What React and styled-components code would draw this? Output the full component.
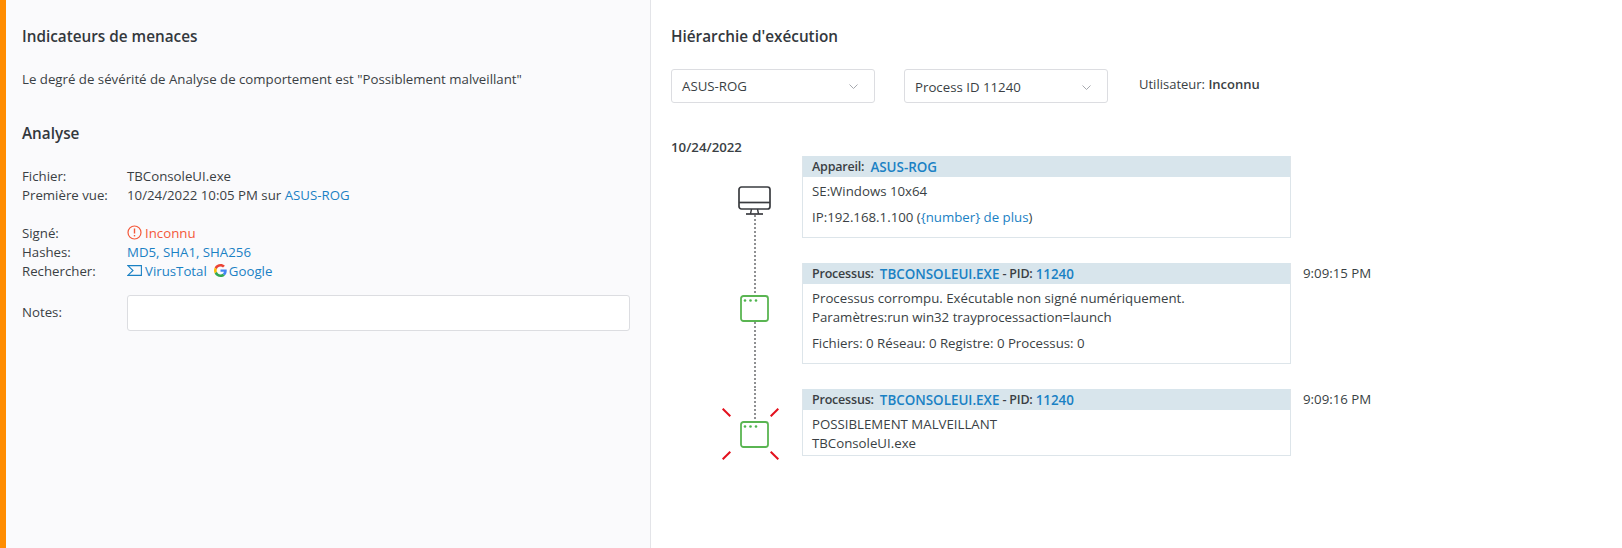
import React from 'react';
import styled, { createGlobalStyle } from 'styled-components';

const GlobalStyle = createGlobalStyle`
  html, body { margin: 0; padding: 0; background: #fff; }
  body {
    font-family: "Open Sans", "Noto Sans", sans-serif;
    font-size: 13.25px;
    color: #3a3f44;
  }
`;

const Page = styled.div`
  display: flex;
  width: 1622px;
  height: 548px;
  overflow: hidden;
`;

const LeftPanel = styled.section`
  width: 651px;
  box-sizing: border-box;
  flex: none;
  background: #fafafc;
  border-left: 6px solid #ff8c00;
  border-right: 1px solid #e3e4e8;
  padding: 26px 20px 0 16px;
`;

const RightPanel = styled.section`
  flex: 1;
  padding: 26px 0 0 20px;
`;

const Title = styled.h2`
  margin: 0;
  font-size: 15.3px;
  line-height: 21px;
  font-weight: 600;
  color: #33383d;
`;

const Paragraph = styled.p`
  margin: 23px 0 0;
  line-height: 18px;
`;

const SectionTitle = styled(Title)`
  margin-top: 35px;
`;

const Facts = styled.div`
  display: grid;
  grid-template-columns: 105px 1fr;
  grid-auto-rows: 19px;
  align-items: center;
  margin-top: ${p => p.$top}px;
`;

const Label = styled.span``;
const Value = styled.span`
  display: flex;
  align-items: center;
  gap: 3px;
`;

const Link = styled.a`
  color: #1a81c4;
  text-decoration: none;
`;

const Danger = styled.span`
  color: #f4583a;
`;

const SearchLink = styled.span`
  display: inline-flex;
  align-items: center;
  gap: ${p => p.$gap}px;
  margin-right: 4px;
`;

const NotesRow = styled.div`
  display: grid;
  grid-template-columns: 105px 1fr;
  align-items: center;
  margin-top: 15px;
`;

const NotesLabel = styled.span`
  padding-bottom: 2px;
`;

const NotesInput = styled.div`
  height: 36px;
  box-sizing: border-box;
  background: #fff;
  border: 1px solid #dcdde1;
  border-radius: 3px;
`;

const Toolbar = styled.div`
  display: flex;
  align-items: center;
  margin-top: 22px;
`;

const Select = styled.div`
  width: 204px;
  height: 34px;
  box-sizing: border-box;
  display: flex;
  align-items: center;
  justify-content: space-between;
  padding: ${p => p.$drop || 0}px 16px 0 10px;
  margin-right: 29px;
  border: 1px solid #dcdde1;
  border-radius: 3px;
  background: #fff;
`;

const UserInfo = styled.div`
  margin-left: 2px;
  margin-top: -5px;
  font-size: 13px;
`;

const Strong = styled.span`
  font-weight: 600;
`;

const DateLabel = styled.div`
  margin-top: 35px;
  height: 18px;
  line-height: 18px;
  font-weight: 600;
`;

const Row = styled.div`
  display: grid;
  grid-template-columns: 131px 489px auto;
  padding-bottom: 25px;
`;

const Rail = styled.div`
  display: flex;
  flex-direction: column;
  align-items: center;
  width: 33px;
  margin-left: 67px;
`;

const dashes = 'repeating-linear-gradient(#8f9092 0 2px, transparent 2px 4px)';

const Stub = styled.div`
  flex: none;
  width: 2px;
  height: ${p => p.$height}px;
  background: ${p => (p.$hidden ? 'none' : dashes)};
`;

const Tail = styled.div`
  flex: 1;
  width: 2px;
  background: ${p => (p.$hidden ? 'none' : dashes)};
  margin-bottom: -25px;
`;

const IconWrap = styled.div`
  position: relative;
  display: flex;
  flex: none;
`;

const Rays = styled.svg`
  position: absolute;
  left: -18px;
  top: -13px;
`;

const Card = styled.div`
  border: 1px solid #dde5ea;
  border-top: 0;
  background: #fff;
`;

const CardHeader = styled.div`
  height: 21px;
  display: flex;
  align-items: center;
  white-space: pre;
  padding-left: 9px;
  background: #d8e5ec;
  font-size: 12.5px;
  font-weight: 600;
  letter-spacing: -0.2px;
`;

const HeaderLink = styled(Link)`
  font-size: 13.4px;
  letter-spacing: 0;
`;

const CardBody = styled.div`
  padding: 5px 9px ${p => p.$bottom}px;
  line-height: 19px;
`;

const Spaced = styled.div`
  margin-top: 7px;
`;

const Time = styled.div`
  padding-left: 12px;
  line-height: 20px;
`;

const Chevron = () => (
  <svg width="9" height="5" viewBox="0 0 9 5" fill="none" stroke="#a6a9ae" strokeWidth="1">
    <polyline points="0.5,0.5 4.500,4.500 8.500,0.5" />
  </svg>
);

const AlertIcon = () => (
  <svg width="15" height="15" viewBox="0 0 15 15" fill="none" stroke="#f4583a" strokeWidth="1.200">
    <circle cx="7.500" cy="7.500" r="6.500" />
    <line x1="7.500" y1="3.500" x2="7.500" y2="8.500" strokeWidth="1.400" />
    <line x1="7.500" y1="10" x2="7.500" y2="11.400" strokeWidth="1.400" />
  </svg>
);

const VirusTotalIcon = () => (
  <svg width="15" height="11" viewBox="0 0 15 11" fill="none" stroke="#1a81c4" strokeWidth="1.100">
    <path d="M0.8 0.6h13.600v9.800H0.8L6 5.500z" />
  </svg>
);

const GoogleIcon = () => (
  <svg width="13" height="13" viewBox="0 0 48 48">
    <path fill="#ea4335" d="M24 9.500c3.500 0 6.700 1.200 9.200 3.600l6.900-6.900C35.900 2.400 30.500 0 24 0 14.600 0 6.500 5.400 2.600 13.200l8 6.200C12.500 13.600 17.800 9.500 24 9.500z" />
    <path fill="#4285f4" d="M47 24.500c0-1.600-.1-3.100-.4-4.500H24v9h12.900c-.6 3-2.200 5.500-4.700 7.200l7.700 6C44.400 38 47 31.800 47 24.500z" />
    <path fill="#fbbc05" d="M10.600 28.600c-.5-1.400-.8-3-.8-4.600s.3-3.200.8-4.600l-8-6.200C.9 16.500 0 20.100 0 24s.9 7.500 2.600 10.800z" />
    <path fill="#34a853" d="M24 48c6.500 0 11.900-2.100 15.900-5.800l-7.700-6c-2.200 1.500-4.900 2.300-8.200 2.300-6.200 0-11.500-4.200-13.400-9.900l-8 6.200C6.500 42.600 14.600 48 24 48z" />
  </svg>
);

const MonitorIcon = () => (
  <svg width="33" height="29" viewBox="0 0 33 29" fill="none" stroke="#3a3c40" strokeWidth="1.700">
    <rect x="1" y="1" width="31" height="22" rx="2.500" />
    <line x1="1" y1="16.500" x2="32" y2="16.500" />
    <path d="M13.500 23l-1 5M19.500 23l1 5" strokeWidth="1.400" />
    <line x1="8" y1="28" x2="25" y2="28" />
  </svg>
);

const WindowIcon = () => (
  <svg width="29" height="27" viewBox="0 0 29 27" fill="none">
    <rect x="1" y="1" width="27" height="25" rx="2.500" stroke="#5ab552" strokeWidth="1.800" />
    <circle cx="5" cy="5.500" r="1.300" fill="#4fb54e" />
    <circle cx="10.500" cy="5.500" r="1.300" fill="#4fb54e" />
    <circle cx="16" cy="5.500" r="1.300" fill="#4fb54e" />
  </svg>
);

const AlertRays = () => (
  <Rays width="57" height="52" viewBox="0 0 57 52" stroke="#e3101d" strokeWidth="2">
    <line x1="0.7" y1="0.7" x2="8.300" y2="8.300" />
    <line x1="56.300" y1="0.7" x2="48.700" y2="8.300" />
    <line x1="0.7" y1="51.300" x2="8.300" y2="43.700" />
    <line x1="56.300" y1="51.300" x2="48.700" y2="43.700" />
  </Rays>
);

const ProcessHeader = () => (
  <CardHeader>
    Processus:  <HeaderLink>TBCONSOLEUI.EXE</HeaderLink> - PID: <HeaderLink>11240</HeaderLink>
  </CardHeader>
);

const App = () => (
  <>
    <GlobalStyle />
    <Page>
      <LeftPanel>
        <Title>Indicateurs de menaces</Title>
        <Paragraph>Le degré de sévérité de Analyse de comportement est "Possiblement malveillant"</Paragraph>
        <SectionTitle>Analyse</SectionTitle>
        <Facts $top={22}>
          <Label>Fichier:</Label>
          <Value>TBConsoleUI.exe</Value>
          <Label>Première vue:</Label>
          <span>10/24/2022 10:05 PM sur <Link>ASUS-ROG</Link></span>
        </Facts>
        <Facts $top={19}>
          <Label>Signé:</Label>
          <Value><AlertIcon /><Danger>Inconnu</Danger></Value>
          <Label>Hashes:</Label>
          <Value><Link>MD5, SHA1, SHA256</Link></Value>
          <Label>Rechercher:</Label>
          <Value>
            <SearchLink $gap={3}><VirusTotalIcon /><Link>VirusTotal</Link></SearchLink>
            <SearchLink $gap={2}><GoogleIcon /><Link>Google</Link></SearchLink>
          </Value>
        </Facts>
        <NotesRow>
          <NotesLabel>Notes:</NotesLabel>
          <NotesInput />
        </NotesRow>
      </LeftPanel>
      <RightPanel>
        <Title>Hiérarchie d'exécution</Title>
        <Toolbar>
          <Select>ASUS-ROG<Chevron /></Select>
          <Select $drop={2}>Process ID 11240<Chevron /></Select>
          <UserInfo>Utilisateur: <Strong>Inconnu</Strong></UserInfo>
        </Toolbar>
        <DateLabel>10/24/2022</DateLabel>
        <Row>
          <Rail>
            <Stub $hidden $height={30} />
            <IconWrap><MonitorIcon /></IconWrap>
            <Tail />
          </Rail>
          <Card>
            <CardHeader>Appareil:  <HeaderLink>ASUS-ROG</HeaderLink></CardHeader>
            <CardBody $bottom={10}>
              <div>SE:Windows 10x64</div>
              <Spaced>IP:192.168.1.100 (<Link>{'{number} de plus'}</Link>)</Spaced>
            </CardBody>
          </Card>
          <Time />
        </Row>
        <Row>
          <Rail>
            <Stub $height={32} />
            <IconWrap><WindowIcon /></IconWrap>
            <Tail />
          </Rail>
          <Card>
            <ProcessHeader />
            <CardBody $bottom={10}>
              <div>Processus corrompu. Exécutable non signé numériquement.</div>
              <div>Paramètres:run win32 trayprocessaction=launch</div>
              <Spaced>Fichiers: 0 Réseau: 0 Registre: 0 Processus: 0</Spaced>
            </CardBody>
          </Card>
          <Time>9:09:15 PM</Time>
        </Row>
        <Row>
          <Rail>
            <Stub $height={32} />
            <IconWrap><WindowIcon /><AlertRays /></IconWrap>
            <Tail $hidden />
          </Rail>
          <Card>
            <ProcessHeader />
            <CardBody $bottom={2}>
              <div>POSSIBLEMENT MALVEILLANT</div>
              <div>TBConsoleUI.exe</div>
            </CardBody>
          </Card>
          <Time>9:09:16 PM</Time>
        </Row>
      </RightPanel>
    </Page>
  </>
);

export default App;
